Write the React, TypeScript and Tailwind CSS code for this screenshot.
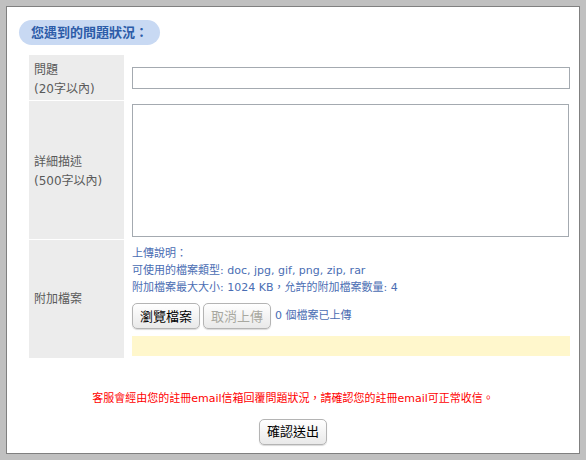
const FONT = "font-['DejaVu_Sans','Noto_Sans_CJK_TC',sans-serif]";

const BTN =
  "h-[26px] rounded-[5px] border border-[#b4b4b4] bg-gradient-to-b from-white to-[#e9e9e9] px-[7px] text-[13px] leading-none shadow-[0_1px_1px_rgba(0,0,0,0.15)]";

export default function App() {
  return (
    <div className={`w-[586px] h-[460px] border-[6px] border-[#c0c0c0] bg-white ${FONT}`}>
      <div className="h-full border border-[#808080] bg-white">
        <div className="ml-[12px] mt-[13px] inline-flex h-[25px] items-center rounded-full bg-[#c8d9f3] pl-[12px] pr-[12px]">
          <span className="text-[13px] font-bold text-[#2c5ca8]">您遇到的問題狀況：</span>
        </div>

        <div className="ml-[22px] mt-[10px] grid w-[541px] grid-cols-[95px_446px] gap-y-px bg-white">
          <div className="h-[45px] bg-[#ececec] px-[5px] pt-[6px] text-[12px] leading-[19px] text-[#5a5a5a]">
            <div>問題</div>
            <div>(20字以內)</div>
          </div>
          <div className="h-[45px] pl-[8px] pt-[12px]">
            <input
              type="text"
              className="block h-[22px] w-[438px] border border-[#a4aab0] bg-white outline-none"
            />
          </div>

          <div className="flex h-[138px] flex-col justify-center bg-[#ececec] px-[5px] pt-[4px] text-[12px] leading-[19px] text-[#5a5a5a]">
            <div>詳細描述</div>
            <div>(500字以內)</div>
          </div>
          <div className="h-[138px] pl-[8px] pt-[3px]">
            <textarea className="block h-[133px] w-[437px] resize-none border border-[#a4aab0] bg-white outline-none" />
          </div>

          <div className="flex h-[118px] items-center bg-[#ececec] px-[5px] text-[12px] text-[#5a5a5a]">
            附加檔案
          </div>
          <div className="h-[118px] pl-[8px] pt-[5px]">
            <div className="text-[11px] leading-[17px] text-[#4a6db3]">
              <div>上傳說明：</div>
              <div>可使用的檔案類型: doc, jpg, gif, png, zip, rar</div>
              <div>附加檔案最大大小: 1024 KB，允許的附加檔案數量: 4</div>
            </div>
            <div className="mt-[7px] flex items-center gap-[3px]">
              <button type="button" className={`${BTN} text-black`}>瀏覽檔案</button>
              <button type="button" disabled className={`${BTN} text-[#a8a8a0]`}>取消上傳</button>
              <span className="ml-[1px] text-[11px] text-[#4a6db3]">0 個檔案已上傳</span>
            </div>
            <div className="mt-[7px] h-[20px] w-[438px] bg-[#fff7cc]" />
          </div>
        </div>

        <p className="mt-[33px] text-center text-[11px] text-[#ff0000]">
          客服會經由您的註冊email信箱回覆問題狀況，請確認您的註冊email可正常收信。
        </p>
        <div className="mt-[11px] flex justify-center">
          <button type="button" className={`${BTN} h-[25px] text-black`}>確認送出</button>
        </div>
      </div>
    </div>
  );
}
